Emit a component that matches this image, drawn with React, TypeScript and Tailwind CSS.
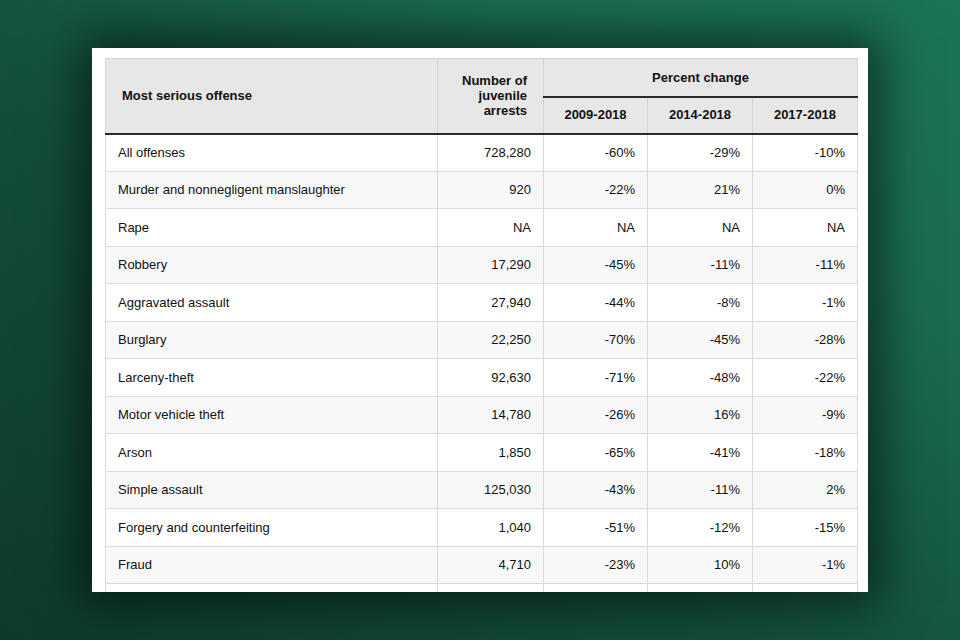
const rows: [string, string, string, string, string][] = [
  ['All offenses', '728,280', '-60%', '-29%', '-10%'],
  ['Murder and nonnegligent manslaughter', '920', '-22%', '21%', '0%'],
  ['Rape', 'NA', 'NA', 'NA', 'NA'],
  ['Robbery', '17,290', '-45%', '-11%', '-11%'],
  ['Aggravated assault', '27,940', '-44%', '-8%', '-1%'],
  ['Burglary', '22,250', '-70%', '-45%', '-28%'],
  ['Larceny-theft', '92,630', '-71%', '-48%', '-22%'],
  ['Motor vehicle theft', '14,780', '-26%', '16%', '-9%'],
  ['Arson', '1,850', '-65%', '-41%', '-18%'],
  ['Simple assault', '125,030', '-43%', '-11%', '2%'],
  ['Forgery and counterfeiting', '1,040', '-51%', '-12%', '-15%'],
  ['Fraud', '4,710', '-23%', '10%', '-1%'],
  // next row is cut by the card edge, only its top border shows
  ['', '', '', '', ''],
];

export default function App() {
  return (
    <div
      className="w-[960px] h-[640px] flex items-center justify-center bg-[linear-gradient(35deg,#0d3a2b_0%,#134d3a_40%,#1a6b51_75%,#1b7457_100%)]"
      style={{ fontFamily: '"Liberation Sans", Arial, sans-serif' }}
    >
      <div className="w-[776px] h-[544px] bg-white overflow-hidden pt-[10px] pl-[13px] pr-[11px] shadow-[0_0_45px_12px_rgba(0,0,0,0.55)]">
        <table className="w-[752px] table-fixed border-collapse text-[13px] text-[#111]">
          <colgroup>
            <col className="w-[332px]" />
            <col className="w-[106px]" />
            <col className="w-[104px]" />
            <col className="w-[105px]" />
            <col className="w-[105px]" />
          </colgroup>
          <thead className="bg-[#e7e7e7]">
            <tr className="h-[38px]">
              <th
                rowSpan={2}
                className="text-left font-bold pl-4 border border-[#d4d4d4] border-b-2 border-b-[#2a2a2a]"
              >
                Most serious offense
              </th>
              <th
                rowSpan={2}
                className="text-right font-bold pr-[16px] leading-[15px] border border-[#d4d4d4] border-b-2 border-b-[#2a2a2a]"
              >
                Number of
                <br />
                juvenile
                <br />
                arrests
              </th>
              <th
                colSpan={3}
                className="text-center font-bold border border-[#d4d4d4] border-b-2 border-b-[#2a2a2a]"
              >
                Percent change
              </th>
            </tr>
            <tr className="h-[37px]">
              {['2009-2018', '2014-2018', '2017-2018'].map((y) => (
                <th
                  key={y}
                  className="text-center font-bold border border-[#d4d4d4] border-b-2 border-b-[#2a2a2a]"
                >
                  {y}
                </th>
              ))}
            </tr>
          </thead>
          <tbody>
            {rows.map((r, i) => (
              <tr key={i} className={`h-[37.5px] ${i % 2 === 1 ? 'bg-[#f8f8f8]' : 'bg-white'}`}>
                <td className="pl-3 border border-[#dadada]">{r[0]}</td>
                {r.slice(1).map((v, j) => (
                  <td key={j} className="text-right pr-3 border border-[#dadada]">
                    {v}
                  </td>
                ))}
              </tr>
            ))}
          </tbody>
        </table>
      </div>
    </div>
  );
}
